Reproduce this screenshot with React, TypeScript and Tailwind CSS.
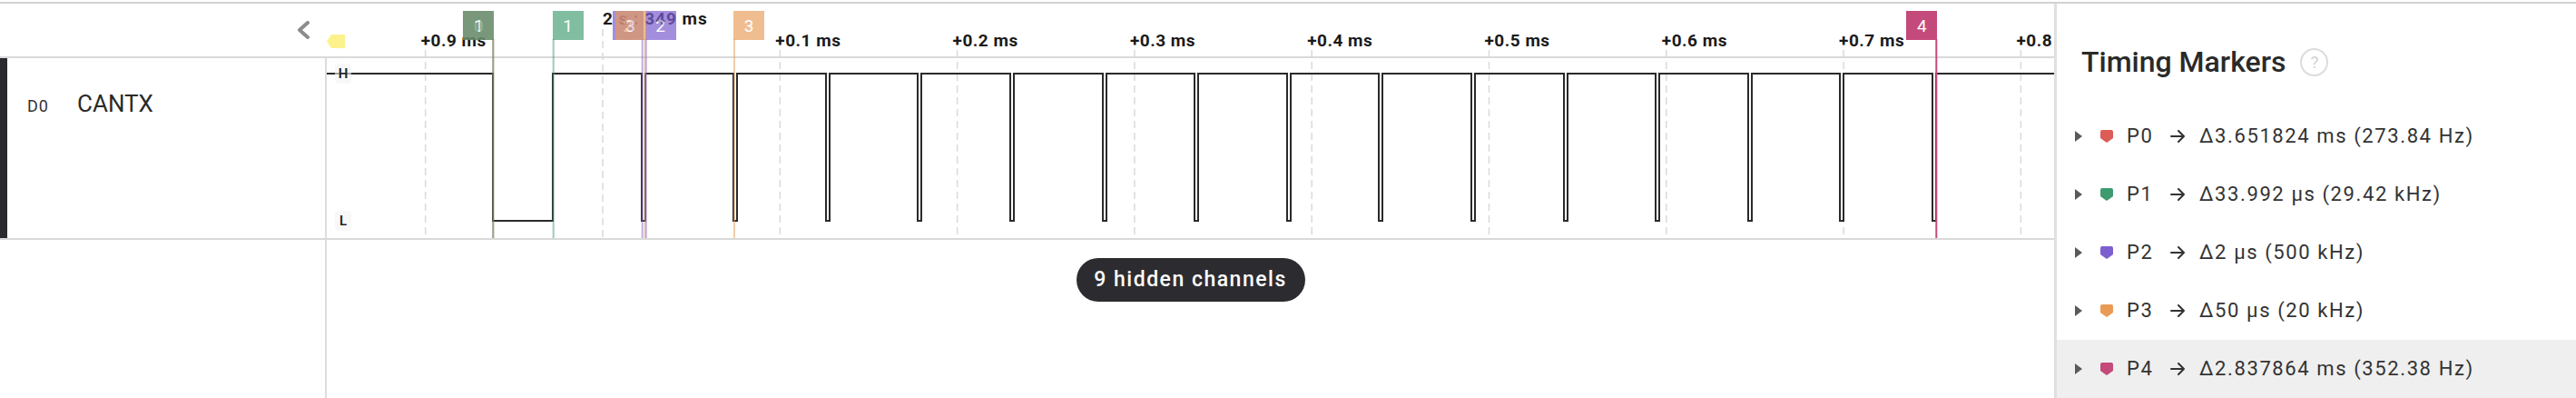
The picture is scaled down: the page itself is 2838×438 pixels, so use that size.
import React from "react";

type Marker = { x: number; side: "l" | "r"; color: string; label: string; opacity: number };

const GRID0 = 664;
const STEP = 195.3;
const gridXs = Array.from({ length: 10 }, (_, i) => GRID0 + (i - 1) * STEP);

const markers: Marker[] = [
  { x: 543.3, side: "l", color: "#dc5c58", label: "0", opacity: 0.65 },
  { x: 543.3, side: "l", color: "#3e9b70", label: "1", opacity: 0.65 },
  { x: 609.7, side: "r", color: "#3e9b70", label: "1", opacity: 0.65 },
  { x: 707.7, side: "l", color: "#7d5fd0", label: "2", opacity: 0.7 },
  { x: 711.7, side: "r", color: "#7d5fd0", label: "2", opacity: 0.7 },
  { x: 710.7, side: "l", color: "#e99b56", label: "3", opacity: 0.65 },
  { x: 809, side: "r", color: "#e99b56", label: "3", opacity: 0.65 },
  { x: 2133.3, side: "l", color: "#c44a7c", label: "4", opacity: 1 },
];

const rows = [
  { p: "P0", color: "#dc5c58", text: "Δ3.651824 ms (273.84 Hz)", active: false },
  { p: "P1", color: "#3e9b70", text: "Δ33.992 µs (29.42 kHz)", active: false },
  { p: "P2", color: "#7d5fd0", text: "Δ2 µs (500 kHz)", active: false },
  { p: "P3", color: "#e99b56", text: "Δ50 µs (20 kHz)", active: false },
  { p: "P4", color: "#c44a7c", text: "Δ2.837864 ms (352.38 Hz)", active: true },
];

function wavePath() {
  const H = 17;
  const L = 179;
  const X = (px: number) => Math.round(px - 360);
  let d = `M0 ${H} H${X(542.5)} V${L} H${X(609)} V${H}`;
  for (let k = 0; k < 15; k++) {
    const f = 706.6 + k * 101.6;
    d += ` H${X(f)} V${L} H${X(f + 4)} V${H}`;
  }
  d += " H1903";
  return d;
}

function FlagIcon({ color }: { color: string }) {
  return (
    <svg width="14" height="14" viewBox="0 0 14 14">
      <path d="M2 0 H12 Q14 0 14 2 V9 L7.8 13.5 Q7 14.1 6.2 13.5 L0 9 V2 Q0 0 2 0 Z" fill={color} />
    </svg>
  );
}

export default function App() {
  return (
    <div className="relative w-[2838px] h-[438px] overflow-hidden bg-white font-[family-name:Roboto,sans-serif] text-[#2a2a2a]">
      <div className="h-[2px]" />
      <div className="h-[2px] bg-[#d2d2d2]" />
      <div className="flex h-[434px]">
        {/* Left: timeline + channels */}
        <div className="relative w-[2263px] h-full overflow-hidden flex flex-col">
          {/* grid lines (under waveform) */}
          <svg className="absolute left-0 top-0 pointer-events-none" width={2263} height={260}>
            {gridXs.map((x, i) => (
              <line
                key={i}
                x1={x}
                x2={x}
                y1={i === 1 ? 28 : 51}
                y2={258}
                stroke="#dadada"
                strokeWidth={1.5}
                strokeDasharray="8 5"
              />
            ))}
          </svg>

          {/* header */}
          <div className="h-[58px] flex">
            <div className="w-[358px] flex justify-end items-start pr-[17px] pt-[19px]">
              <svg width="14" height="20" viewBox="0 0 14 20">
                <polyline
                  points="12,2 3,10 12,18"
                  fill="none"
                  stroke="#8c8c8c"
                  strokeWidth="4"
                  strokeLinecap="round"
                  strokeLinejoin="round"
                />
              </svg>
            </div>
            <div className="flex-1" />
          </div>
          <div className="h-[2px] bg-[#d9d9d9]" />

          {/* channel row */}
          <div className="h-[198px] flex">
            <div className="w-[358px] flex">
              <div className="w-[8px] bg-[#2a2a2e]" />
              <div className="flex items-baseline pt-[37px] pl-[22px]">
                <span className="w-[55px] text-[18px] leading-none tracking-[1px] text-[#333]">D0</span>
                <span className="text-[26px] leading-none text-[#2a2a2a]">CANTX</span>
              </div>
            </div>
            <div className="w-[2px] bg-[#dcdcdc]" />
            <div className="relative flex-1">
              <svg className="relative block" width={1903} height={198}>
                <path d={wavePath()} fill="none" stroke="#2a2a2a" strokeWidth={2} shapeRendering="crispEdges" />
              </svg>
              <div className="absolute left-[9px] top-[6px] w-[18px] h-[22px] rounded-[4px] bg-[#f4f4f4]/60 flex items-center justify-center text-[15px] font-semibold leading-none text-[#222]">
                H
              </div>
              <div className="absolute left-[9px] top-[168px] w-[18px] h-[22px] rounded-[4px] bg-[#f4f4f4]/60 flex items-center justify-center text-[15px] font-semibold leading-none text-[#222]">
                L
              </div>
            </div>
          </div>
          <div className="h-[2px] bg-[#d9d9d9]" />

          {/* below */}
          <div className="flex-1 flex">
            <div className="w-[358px]" />
            <div className="w-[2px] bg-[#dcdcdc]" />
            <div className="flex-1 flex justify-center items-start pt-[20px]">
              <div className="w-[252px] h-[48px] rounded-full bg-[#2c2c30] text-white text-[23px] font-medium tracking-[1.5px] flex items-center justify-center">
                9 hidden channels
              </div>
            </div>
          </div>

          {/* time labels */}
          <div
            className="absolute top-[7px] text-[19px] font-bold leading-[19px] tracking-[1px] whitespace-nowrap text-[#1a1a1a]"
            style={{ left: 664 }}
          >
            2 s : 349 ms
          </div>
          {gridXs.map((x, i) =>
            i === 1 ? null : (
              <div
                key={i}
                className="absolute top-[31px] text-[19px] font-bold leading-[19px] tracking-[0.5px] whitespace-nowrap text-[#1a1a1a]"
                style={{ left: x - 5 }}
              >
                {i === 0 ? "+0.9 ms" : `+0.${i - 1} ms`}
              </div>
            )
          )}

          {/* yellow trigger tag */}
          <svg className="absolute left-[360px] top-[34px]" width="20" height="15" viewBox="0 0 20 15">
            <polygon points="0,7.5 5,0 20,0 20,15 5,15" fill="#fbf28c" />
          </svg>

          {/* marker lines */}
          <svg className="absolute left-0 top-0 pointer-events-none" width={2263} height={260}>
            {markers.map((m, i) => (
              <line
                key={i}
                x1={m.x}
                x2={m.x}
                y1={39}
                y2={258}
                stroke={m.color}
                strokeWidth={2}
                opacity={m.opacity === 1 ? 1 : 0.5}
              />
            ))}
          </svg>

          {/* marker flags */}
          {markers.map((m, i) => (
            <div
              key={i}
              className="absolute top-[8px] w-[34px] h-[32px] flex items-center justify-center text-white text-[19px] leading-none"
              style={{
                left: m.side === "l" ? m.x + 1 - 34 : m.x - 1,
                backgroundColor: m.color,
                opacity: m.opacity,
              }}
            >
              {m.label}
            </div>
          ))}
        </div>

        {/* Right panel */}
        <div className="w-[575px] h-full border-l-[3px] border-[#e0e0e0] flex flex-col">
          <div className="mt-[45px] pl-[27px] flex items-center">
            <span className="text-[32px] leading-[38px] font-medium text-[#2a2a2a]">Timing Markers</span>
            <div className="ml-[16px] w-[31px] h-[31px] rounded-full border-2 border-[#dcdcdc] flex items-center justify-center text-[19px] leading-none text-[#d2d2d2]">
              ?
            </div>
          </div>
          <div className="mt-[31px] flex flex-col">
            {rows.map((r) => (
              <div
                key={r.p}
                className={
                  "h-[64px] flex items-center pl-[20px] " + (r.active ? "bg-[#efefef]" : "")
                }
              >
                <svg width="8" height="12" viewBox="0 0 8 12">
                  <path d="M0 0 L8 6 L0 12 Z" fill="#5a5a5a" />
                </svg>
                <div className="ml-[20px] flex">
                  <FlagIcon color={r.color} />
                </div>
                <span className="ml-[15px] w-[47px] text-[22px] leading-none tracking-[1.6px] text-[#333]">
                  {r.p}
                </span>
                <svg width="18" height="14" viewBox="0 0 18 14">
                  <path
                    d="M2 7 H16 M10 1 L16 7 L10 13"
                    fill="none"
                    stroke="#333"
                    strokeWidth="2"
                    strokeLinecap="round"
                    strokeLinejoin="round"
                  />
                </svg>
                <span className="ml-[15px] text-[22px] leading-none tracking-[1.6px] text-[#333] whitespace-nowrap">
                  {r.text}
                </span>
              </div>
            ))}
          </div>
        </div>
      </div>
    </div>
  );
}
